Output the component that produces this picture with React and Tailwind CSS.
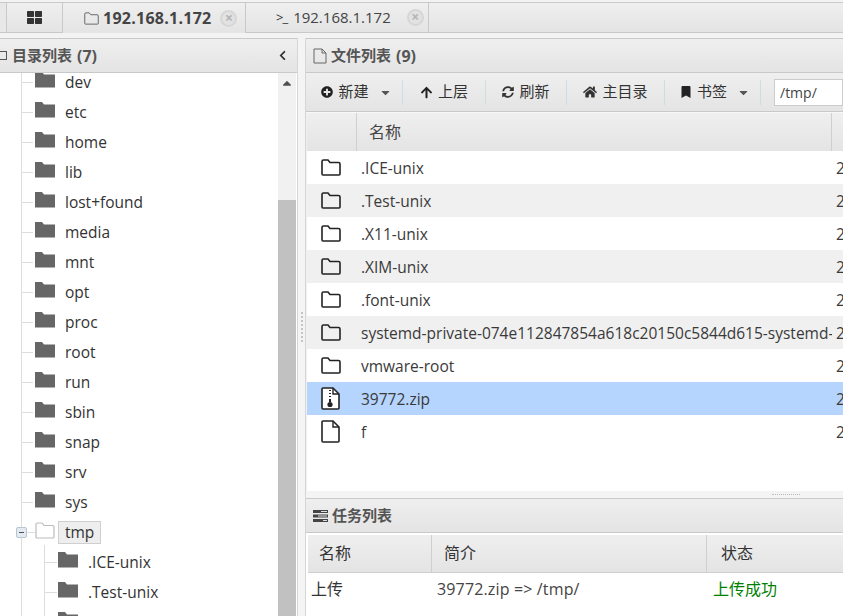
import React from 'react';
import { FaPlusCircle, FaArrowUp, FaSyncAlt, FaHome, FaBookmark, FaCaretDown, FaCaretUp, FaChevronLeft, FaThLarge } from 'react-icons/fa';

const FONT = '"Open Sans","Noto Sans CJK SC",sans-serif';
const grad = 'bg-gradient-to-b from-[#efefef] to-[#e4e4e4]';

const SolidFolder = () => (
  <svg width="20" height="16" viewBox="0 0 20 16" className="shrink-0">
    <path d="M0 0h7l2 2.500h11V15.500H0z" fill="#666666" />
  </svg>
);
const LineFolder = ({ w = 20, h = 17, c = '#222', sw = 1.6 }) => (
  <svg width={w} height={h} viewBox="0 0 20 17" className="shrink-0">
    <path d="M1 15V2.500Q1 1 2.500 1h4.500l2 2.500h8.500Q19 3.500 19 5v10q0 1-1 1H2q-1 0-1-1z" fill="none" stroke={c} strokeWidth={sw} />
  </svg>
);
const FileIcon = ({ zip }) => (
  <svg width="19" height="23" viewBox="0 0 19 23" className="shrink-0">
    <path d="M1 2q0-1 1-1h10l6 6v14q0 1-1 1H2q-1 0-1-1z" fill="#fff" stroke="#222" strokeWidth="1.600" />
    <path d="M12 1v6h6" fill="none" stroke="#222" strokeWidth="1.400" />
    {zip && <path d="M8 3h2v1H8zM8 6h2v1H8zM8 9h2v1H8zM8 12h2v3H8z" fill="#222" />}
    {zip && <circle cx="9" cy="17.500" r="2.600" fill="#222" />}
  </svg>
);

const Tree = ({ name }) => (
  <div className="h-[30px] flex items-center">
    <div className="w-[12px] ml-[21px] h-px bg-[#dddddd] shrink-0" />
    <div className="ml-[2px] -mt-[4px]"><SolidFolder /></div>
    <span className="ml-[10px] pt-[2px] text-[15.5px] text-[#333]">{name}</span>
  </div>
);

const Sub = ({ name }) => (
  <div className="h-[30px] flex items-center">
    <div className="w-[12px] ml-[45px] h-px bg-[#dddddd] shrink-0" />
    <div className="ml-[1px] -mt-[4px]"><SolidFolder /></div>
    <span className="ml-[10px] pt-[2px] text-[15.5px] text-[#333]">{name}</span>
  </div>
);

const Close = ({ ml }) => (
  <span className={`${ml} w-[17px] h-[17px] shrink-0 rounded-full border-2 border-[#d6d6d6] bg-[#e2e2e2] text-[#b4b4b4] text-[14px] leading-[12px] text-center font-bold`}>×</span>
);

const ToolBtn = ({ icon, label, caret, width }) => (
  <div className={`${width} h-[25px] flex items-center justify-center text-[15px] text-[#333] border-r border-[#cfdde3]`}>
    {icon}
    <span className="ml-[5px] -mt-[2px]">{label}</span>
    {caret && <FaCaretDown className="ml-[10px] text-[#555] text-[13px]" />}
  </div>
);

const rows = [
  ['.ICE-unix', 'f'], ['.Test-unix', 'f'], ['.X11-unix', 'f'], ['.XIM-unix', 'f'], ['.font-unix', 'f'],
  ['systemd-private-074e112847854a618c20150c5844d615-systemd-timesyncd', 'f'], ['vmware-root', 'f'], ['39772.zip', 'z'], ['f', 'd'],
];

export default function App() {
  const names = ['dev','etc','home','lib','lost+found','media','mnt','opt','proc','root','run','sbin','snap','srv','sys'];
  return (
    <div className="w-[843px] h-[616px] overflow-hidden bg-[#f2f2f2] flex flex-col" style={{ fontFamily: FONT }}>
      <div className="h-[3px] shrink-0 bg-[#f3f3f3] border-b border-[#c9c9c9]" />
      <div className="h-[30px] flex shrink-0">
        <div className="w-[7px] border-r border-b border-[#c9c9c9] bg-[#e8e8e8]" />
        <div className={`w-[56px] flex items-center justify-center border-r border-b border-[#c9c9c9] ${grad}`}>
          <FaThLarge className="text-[15px] text-[#333]" />
        </div>
        <div className={`w-[183px] pl-[21px] flex items-center border-r border-[#c9c9c9] ${grad}`}>
          <span className="mr-[4px]"><LineFolder w={15} h={13} c="#666" sw={1.300} /></span>
          <span className="text-[16px] font-bold tracking-[0.25px] text-[#444]">192.168.1.172</span>
          <Close ml="ml-[9px]" />
        </div>
        <div className={`w-[183px] pl-[30px] flex items-center border-r border-b border-[#c9c9c9] ${grad}`}>
          <span className="mr-[6px] text-[13px] text-[#333] tracking-[-1px]">&gt;_</span>
          <span className="text-[15px] text-[#444]">192.168.1.172</span>
          <Close ml="ml-[16px]" />
        </div>
        <div className={`flex-1 border-b border-[#c9c9c9] ${grad}`} />
      </div>
      <div className="h-[5px] shrink-0 bg-[#f3f3f3]" />
      <div className="flex-1 flex min-h-0">
        <div className="w-[298px] flex flex-col shrink-0 bg-white border-r border-[#d6d6d6]">
          <div className={`h-[35px] shrink-0 border-y border-[#c9c9c9] flex items-center ${grad}`}>
            <span className="w-[7px] h-[9px] border border-l-0 border-[#555] mr-[5px]" />
            <span className="text-[15px] font-semibold text-[#555]">目录列表</span>
            <span className="ml-[5px] text-[16px] font-bold text-[#555]">(7)</span>
            <FaChevronLeft className="ml-auto mr-[9px] text-[11px] text-[#333]" />
          </div>
          <div className="flex-1 flex min-h-0">
            <div className="flex-1 overflow-hidden relative">
              <div className="absolute left-[21px] top-0 bottom-0 w-px bg-[#dddddd]" />
              <div className="absolute left-[44px] top-[472px] bottom-0 w-px bg-[#dddddd]" />
              <div className="-mt-[6px]">
                {names.map(n => <Tree key={n} name={n} />)}
                <div className="h-[30px] flex items-center">
                  <div className="ml-[16px] w-[11px] h-[11px] border border-[#b6c6d2] rounded-[2px] bg-[#e4eaef] flex items-center justify-center shrink-0 relative">
                    <div className="w-[5px] h-px bg-[#456]" />
                  </div>
                  <div className="w-[8px] h-px bg-[#dddddd]" />
                  <div className="-mt-[3px]"><LineFolder c="#bbbbbb" sw={1.200} /></div>
                  <span className="ml-[3px] px-[6px] h-[23px] leading-[20px] border border-[#cfcfcf] bg-[#eeeeee] text-[15.5px] text-[#333]">tmp</span>
                </div>
                <Sub name=".ICE-unix" />
                <Sub name=".Test-unix" />
                <Sub name="" />
              </div>
            </div>
            <div className="w-[18px] mr-[1px] shrink-0 bg-[#f1f1f1] flex flex-col">
              <div className="h-[127px] flex justify-center pt-[3px]"><FaCaretUp className="text-[14px] text-[#505050]" /></div>
              <div className="flex-1 bg-[#c1c1c1]" />
            </div>
          </div>
        </div>
        <div className="w-[7px] shrink-0 bg-[#f4f4f4] flex items-center justify-center">
          <div className="w-[2px] h-[30px] border-l-2 border-dotted border-[#c4c4c4]" />
        </div>
        <div className="flex-1 min-w-0 flex flex-col border-l border-[#d6d6d6] bg-white">
          <div className={`h-[35px] shrink-0 border-y border-[#c9c9c9] flex items-center pl-[7px] ${grad}`}>
            <svg width="14" height="16" viewBox="0 0 14 16" className="mr-[4px]"><path d="M1 1h8l4 4v10H1zM9 1v4h4" fill="none" stroke="#666" /></svg>
            <span className="text-[15px] font-semibold text-[#555]">文件列表</span>
            <span className="ml-[5px] text-[16px] font-bold text-[#555]">(9)</span>
          </div>
          <div className={`h-[39px] shrink-0 border-b border-[#c9c9c9] flex items-center ${grad}`}>
            <ToolBtn width="w-[97px] pl-[5px]" icon={<FaPlusCircle className="text-[12px] text-[#222]" />} label="新建" caret />
            <ToolBtn width="w-[83px]" icon={<FaArrowUp className="text-[13px] text-[#222]" />} label="上层" />
            <ToolBtn width="w-[81px]" icon={<FaSyncAlt className="text-[12px] text-[#333]" />} label="刷新" />
            <ToolBtn width="w-[98px]" icon={<FaHome className="text-[14px] text-[#333]" />} label="主目录" />
            <ToolBtn width="w-[96px] pl-[5px]" icon={<FaBookmark className="text-[12px] text-[#222]" />} label="书签" caret />
            <div className="ml-[13px] flex-1 h-[27px] bg-white border border-[#cccccc] pl-[5px] text-[14px] leading-[26px] text-[#444]">/tmp/</div>
          </div>
          <div className="flex-1 min-h-0 flex flex-col border-l border-[#f0f0f0]">
            <div className={`h-[39px] shrink-0 flex text-[16px] text-[#444] ${grad} border-t border-[#f8f8f8]`}>
              <div className="w-[50px] border-r border-[#cfcfcf]" />
              <div className="w-[475px] border-r border-[#cfcfcf] pl-[12px] leading-[39px]">名称</div>
              <div className="flex-1" />
            </div>
            {rows.map(([n, t], i) => (
              <div key={i} className={`h-[33px] shrink-0 flex items-center text-[15.5px] whitespace-nowrap ${i === 7 ? 'bg-[#b5d5ff]' : i % 2 === 1 ? 'bg-[#f0f0f0]' : 'bg-white'}`}>
                <div className="w-[54px] pl-[14px] flex items-center shrink-0">
                  {t === 'f' ? <LineFolder /> : <FileIcon zip={t === 'z'} />}
                </div>
                <div className="w-[471px] overflow-hidden text-[#3a3a3a] shrink-0 pt-[2px]">{n}</div>
                <div className="pl-[4px] pt-[2px] text-[#3a3a3a]">2</div>
              </div>
            ))}
            <div className="flex-1 bg-white" />
          </div>
          <div className="h-[7px] shrink-0 bg-[#f4f4f4] flex items-center pl-[466px]">
            <div className="w-[28px] border-t border-dotted border-[#bbbbbb]" />
          </div>
          <div className="h-[118px] shrink-0 flex flex-col">
            <div className={`h-[35px] shrink-0 border-y border-[#c9c9c9] flex items-center pl-[7px] ${grad}`}>
              <svg width="15" height="12" viewBox="0 0 15 12" className="mr-[4px]"><path d="M0 0h15v3H0zM0 4.500h15v3H0zM0 9h15v3H0z" fill="#444" /><path d="M8 1h6v1H8zM5 5.500h9v1H5zM10 10h4v1h-4z" fill="#ddd" /></svg>
              <span className="text-[15px] font-semibold text-[#555]">任务列表</span>
            </div>
            <div className={`h-[38px] mt-[2px] shrink-0 flex text-[16px] text-[#333] leading-[36px] border-b border-[#cfcfcf] ml-[2px] ${grad}`}>
              <div className="w-[124px] pl-[11px] border-r border-[#cfcfcf]">名称</div>
              <div className="w-[275px] pl-[12px] border-r border-[#cfcfcf]">简介</div>
              <div className="flex-1 pl-[14px]">状态</div>
            </div>
            <div className="flex text-[16px] ml-[5px] leading-[33px] whitespace-nowrap">
              <div className="w-[126px] text-[#333]">上传</div>
              <div className="w-[276px] text-[#444] tracking-[0.15px]">39772.zip =&gt; /tmp/</div>
              <div className="text-[#008000]">上传成功</div>
            </div>
          </div>
        </div>
      </div>
    </div>
  );
}
